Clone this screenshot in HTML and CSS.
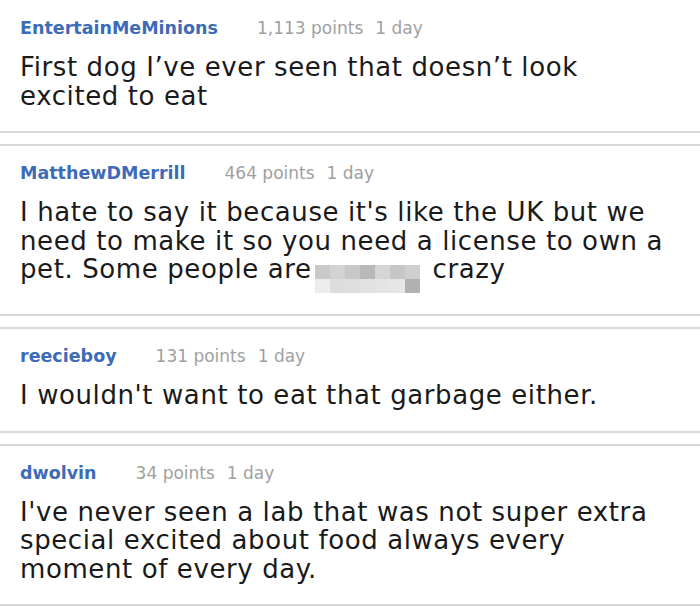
FILE: index.html
```html
<!DOCTYPE html>
<html lang="en">
<head>
<meta charset="utf-8">
<title>Comments</title>
<link rel="stylesheet" href="styles.css">
</head>
<body>
<div class="comments">
  <div class="card">
    <div class="meta-row">
      <span class="user">EntertainMeMinions</span>
      <span class="points">1,113 points</span>
      <span class="age">1 day</span>
    </div>
    <p class="body">First dog I’ve ever seen that doesn’t look excited to eat</p>
  </div>
  <div class="card">
    <div class="meta-row">
      <span class="user">MatthewDMerrill</span>
      <span class="points">464 points</span>
      <span class="age">1 day</span>
    </div>
    <p class="body">I hate to say it because it's like the UK but we need to make it so you need a license to own a pet. Some people are<span class="censor"><i style="background:#c9c9c9"></i><i style="background:#d3d3d3"></i><i style="background:#c8c8c8"></i><i style="background:#b9b9b9"></i><i style="background:#d5d5d5"></i><i style="background:#c6c6c6"></i><i style="background:#cfcfcf"></i><i style="background:#ececec"></i><i style="background:#dcdcdc"></i><i style="background:#dedede"></i><i style="background:#e1e1e1"></i><i style="background:#e4e4e4"></i><i style="background:#e6e6e6"></i><i style="background:#b1b1b1"></i></span> crazy</p>
  </div>
  <div class="card">
    <div class="meta-row">
      <span class="user">reecieboy</span>
      <span class="points">131 points</span>
      <span class="age">1 day</span>
    </div>
    <p class="body">I wouldn't want to eat that garbage either.</p>
  </div>
  <div class="card">
    <div class="meta-row">
      <span class="user">dwolvin</span>
      <span class="points">34 points</span>
      <span class="age">1 day</span>
    </div>
    <p class="body">I've never seen a lab that was not super extra special excited about food always every moment of every day.</p>
  </div>
</div>
</body>
</html>
```
FILE: styles.css
```css
html, body {
  margin: 0;
  padding: 0;
  background: #ffffff;
}

body {
  font-family: "DejaVu Sans", Verdana, sans-serif;
  color: #1a1a1a;
}

.comments {
  display: flex;
  flex-direction: column;
  gap: 11px;
}

.card {
  border-top: 2px solid #d9d9d9;
  border-bottom: 2px solid #d9d9d9;
  padding: 17px 25px 21px 20px;
  background: #ffffff;
}

.card:first-child {
  border-top: 0;
  padding-top: 18px;
}

.meta-row {
  display: flex;
  align-items: baseline;
  font-size: 17.5px;
  line-height: 20px;
  white-space: nowrap;
}

.user {
  font-weight: bold;
  color: #3d6bb8;
  margin-right: 39px;
}

.points,
.age {
  font-size: 17px;
  color: #a0a0a0;
}

.age {
  margin-left: 12px;
}

.body {
  margin: 15px 0 0;
  font-size: 26px;
  line-height: 28.5px;
  letter-spacing: 0.6px;
}

.censor {
  display: inline-block;
  overflow: hidden;
  width: 105px;
  height: 28px;
  margin: 0 4px 0 3px;
  vertical-align: -15px;
  line-height: 0;
}

.censor i {
  float: left;
  width: 15px;
  height: 14px;
}
```
